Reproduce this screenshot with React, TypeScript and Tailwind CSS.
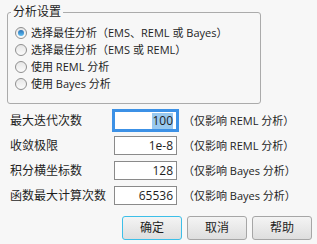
import React from "react";

const radios = [
  { label: "选择最佳分析（EMS、REML 或 Bayes）", checked: true },
  { label: "选择最佳分析（EMS 或 REML）", checked: false },
  { label: "使用 REML 分析", checked: false },
  { label: "使用 Bayes 分析", checked: false },
];

const rows = [
  { label: "最大迭代次数", value: "100", note: "（仅影响 REML 分析）", focused: true },
  { label: "收敛极限", value: "1e-8", note: "（仅影响 REML 分析）", focused: false },
  { label: "积分横坐标数", value: "128", note: "（仅影响 Bayes 分析）", focused: false },
  { label: "函数最大计算次数", value: "65536", note: "（仅影响 Bayes 分析）", focused: false },
];

function Radio({ checked }: { checked: boolean }) {
  return (
    <span className="w-[12px] h-[12px] rounded-full border border-[#8f8f8f] bg-gradient-to-b from-[#e6e6e6] to-[#fbfbfb] flex items-center justify-center shrink-0">
      {checked && (
        <span className="w-[6px] h-[6px] rounded-full bg-gradient-to-b from-[#2a6fb3] to-[#5ec0f5]" />
      )}
    </span>
  );
}

export default function App() {
  return (
    <div className="w-[317px] h-[244px] bg-[#f7f7f7] text-[12px] leading-[16px] text-[#1e1e1e] font-['Open_Sans','Noto_Sans_CJK_SC',sans-serif] pt-[4px]">
      {/* Group box */}
      <fieldset className="ml-[7px] w-[254px] border border-[#ababab] rounded-[3px] px-[7px] pb-[11px]">
        <legend className="-ml-[4px] px-[2px]">分析设置</legend>
        <div className="pt-[4px] flex flex-col text-[11px]">
          {radios.map((r) => (
            <div key={r.label} className="h-[17px] flex items-center gap-[4px] whitespace-nowrap">
              <Radio checked={r.checked} />
              <span>{r.label}</span>
            </div>
          ))}
        </div>
      </fieldset>

      {/* Options */}
      <div className="mt-[7px] flex flex-col gap-[6px]">
        {rows.map((r) => (
          <div key={r.label} className="h-[19px] flex items-center whitespace-nowrap">
            <span className="w-[114px] pl-[10px]">{r.label}</span>
            <div
              className={`w-[63px] h-[19px] bg-white flex items-center justify-end pr-[3px] ${
                r.focused ? "border border-[#3c91e6] ring-2 ring-[#3c91e6]" : "border border-[#8a8a8a]"
              }`}
            >
              <span className={r.focused ? "bg-[#99c9ef]" : ""}>{r.value}</span>
            </div>
            <span className="ml-[6px] text-[11px]">{r.note}</span>
          </div>
        ))}
      </div>

      {/* Buttons */}
      <div className="mt-[11px] flex justify-end gap-[5px] pr-[5px]">
        <button className="w-[60px] h-[24px] rounded-[3px] border border-[#3cbfe8] bg-gradient-to-b from-[#f4f4f4] to-[#dedede]">
          确定
        </button>
        <button className="w-[60px] h-[24px] rounded-[3px] border border-[#a6a6a6] bg-gradient-to-b from-[#f4f4f4] to-[#dedede]">
          取消
        </button>
        <button className="w-[60px] h-[24px] rounded-[3px] border border-[#a6a6a6] bg-gradient-to-b from-[#f4f4f4] to-[#dedede]">
          帮助
        </button>
      </div>
    </div>
  );
}
